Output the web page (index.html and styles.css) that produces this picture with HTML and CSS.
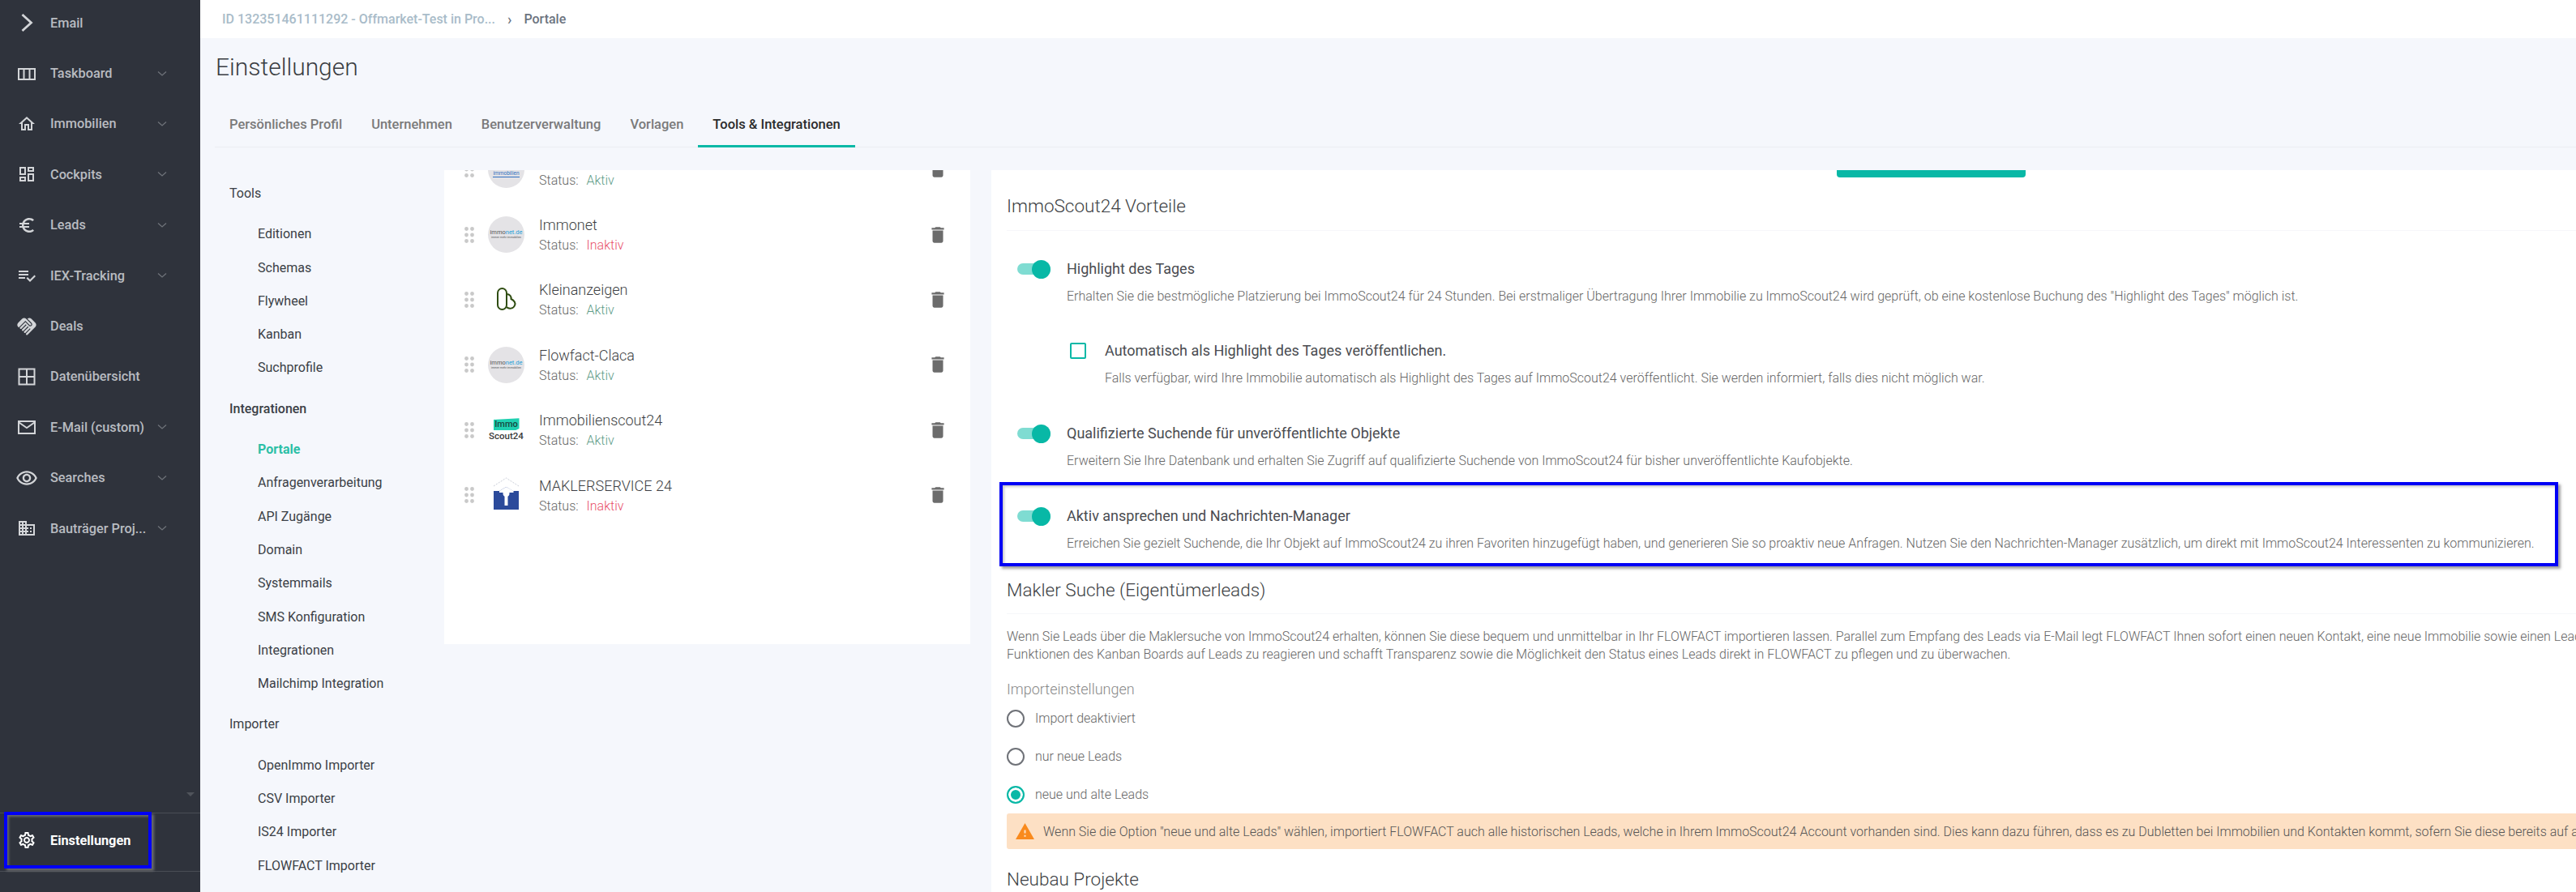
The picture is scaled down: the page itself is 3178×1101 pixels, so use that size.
FILE: index.html
```html
<!DOCTYPE html>
<html lang="de">
<head>
  <meta charset="UTF-8">
  <title>Einstellungen</title>
  <link rel="stylesheet" href="styles.css">
</head>
<body>

  <svg class="sprites" width="0" height="0">
    <symbol id="i-down" viewBox="0 0 12 8"><path d="M1 1.5l5 4.5 5-4.5" fill="none" stroke="currentColor" stroke-width="1.3"/></symbol>
    <symbol id="i-drag" viewBox="0 0 12 20"><circle cx="2.5" cy="2.5" r="2.4"/><circle cx="9.5" cy="2.5" r="2.4"/><circle cx="2.5" cy="10" r="2.4"/><circle cx="9.5" cy="10" r="2.4"/><circle cx="2.5" cy="17.5" r="2.4"/><circle cx="9.5" cy="17.5" r="2.4"/></symbol>
    <symbol id="i-trash" viewBox="0 0 24 24"><path d="M6 19c0 1.1.9 2 2 2h8c1.1 0 2-.9 2-2V7H6v12zM19 4h-3.5l-1-1h-5l-1 1H5v2h14V4z"/></symbol>
  </svg>

  <!-- Seitenleiste -->
  <aside class="sidebar">
    <ul class="side-nav">
      <li class="side-item">
        <svg class="side-icon" viewBox="0 0 24 24"><path d="M6.500 2l11 10-11 10" fill="none" stroke="currentColor" stroke-width="2.8"/></svg>
        <span class="side-text">Email</span>
      </li>
      <li class="side-item">
        <svg class="side-icon" viewBox="0 0 24 24"><path d="M1 5h22v15H1z M3 7v11h4.5V7z M9.5 7v11h5V7z M16.500 7v11H21V7z" fill-rule="evenodd"/></svg>
        <span class="side-text">Taskboard</span>
        <svg class="side-down"><use href="#i-down"/></svg>
      </li>
      <li class="side-item">
        <svg class="side-icon" viewBox="0 0 24 24"><path d="M12 5.690l5 4.500V18h-2v-6H9v6H7v-7.810l5-4.500M12 3L2 12h3v8h6v-6h2v6h6v-8h3L12 3z"/></svg>
        <span class="side-text">Immobilien</span>
        <svg class="side-down"><use href="#i-down"/></svg>
      </li>
      <li class="side-item">
        <svg class="side-icon" viewBox="0 0 24 24"><path d="M19 5v2h-4V5h4M9 5v6H5V5h4m10 8v6h-4v-6h4M9 17v2H5v-2h4M21 3h-8v6h8V3zM11 3H3v10h8V3zm10 8h-8v10h8V11zm-10 4H3v6h8v-6z"/></svg>
        <span class="side-text">Cockpits</span>
        <svg class="side-down"><use href="#i-down"/></svg>
      </li>
      <li class="side-item">
        <svg class="side-icon" viewBox="0 0 24 24"><path d="M15 18.500c-2.510 0-4.680-1.420-5.760-3.500H15v-2H8.580c-.05-.33-.08-.66-.08-1s.03-.67.08-1H15V9H9.240C10.320 6.920 12.500 5.500 15 5.500c1.610 0 3.090.59 4.230 1.570L21 5.300C19.410 3.870 17.300 3 15 3c-3.920 0-7.240 2.510-8.480 6H3v2h3.060c-.04.33-.06.66-.06 1s.02.67.06 1H3v2h3.520c1.240 3.490 4.560 6 8.480 6 2.310 0 4.410-.87 6-2.300l-1.780-1.770c-1.130.98-2.600 1.570-4.220 1.570z"/></svg>
        <span class="side-text">Leads</span>
        <svg class="side-down"><use href="#i-down"/></svg>
      </li>
      <li class="side-item">
        <svg class="side-icon" viewBox="0 0 24 24"><path d="M14 10H2v2h12v-2zm0-4H2v2h12V6zM2 16h8v-2H2v2zm19.500-4.500L23 13l-6.990 7-4.510-4.500L13 14l3.010 3 5.490-5.500z"/></svg>
        <span class="side-text">IEX-Tracking</span>
        <svg class="side-down"><use href="#i-down"/></svg>
      </li>
      <li class="side-item">
        <svg class="side-icon side-icon-wide" viewBox="0 0 24 24"><path d="M16.480 10.410c-.39.39-1.040.39-1.430 0l-4.470-4.460-7.050 7.040-.66-.63c-1.170-1.170-1.170-3.070 0-4.240l4.240-4.240c1.170-1.170 3.070-1.170 4.240 0L16.480 9c.39.39.39 1.020 0 1.410zm.7-2.120c.78.78.78 2.050 0 2.830-1.270 1.270-2.610.22-2.830 0l-3.760-3.760-5.570 5.570c-.39.39-.39 1.020 0 1.410.39.39 1.020.39 1.420 0l4.620-4.620.71.71-4.620 4.620c-.39.39-.39 1.020 0 1.410.39.39 1.020.39 1.420 0l4.620-4.620.71.71-4.620 4.620c-.39.39-.39 1.020 0 1.410.39.39 1.020.39 1.410 0l4.620-4.620.71.71-4.620 4.620c-.39.39-.39 1.020 0 1.410.39.39 1.020.39 1.410 0l8.320-8.340c1.170-1.170 1.170-3.070 0-4.240l-4.240-4.240c-1.150-1.150-3.010-1.170-4.180-.06l4.180 4.180z"/></svg>
        <span class="side-text">Deals</span>
      </li>
      <li class="side-item">
        <svg class="side-icon" viewBox="0 0 24 24"><path d="M1.500 1.500h21v21h-21z M3.500 3.500v7.500H11V3.500z M13 3.500V11h7.500V3.500z M3.500 13v7.500H11V13z M13 13v7.500h7.500V13z" fill-rule="evenodd"/></svg>
        <span class="side-text">Datenübersicht</span>
      </li>
      <li class="side-item">
        <svg class="side-icon" viewBox="0 0 24 24"><path d="M1 4h22v17H1V4zm2.500 2l8.500 6 8.500-6h-17zM21 19V8l-9 6.200L3 8v11h18z" fill-rule="evenodd"/></svg>
        <span class="side-text">E-Mail (custom)</span>
        <svg class="side-down"><use href="#i-down"/></svg>
      </li>
      <li class="side-item">
        <svg class="side-icon side-icon-wide" viewBox="0 0 24 24"><path d="M12 6.500c3.790 0 7.170 2.130 8.820 5.500-1.650 3.370-5.020 5.500-8.820 5.500S4.830 15.370 3.180 12C4.830 8.630 8.210 6.500 12 6.500m0-2C7 4.500 2.730 7.610 1 12c1.730 4.390 6 7.500 11 7.500s9.270-3.110 11-7.500c-1.730-4.390-6-7.500-11-7.500zm0 5c1.380 0 2.500 1.120 2.500 2.500s-1.120 2.500-2.500 2.500-2.500-1.120-2.500-2.500 1.120-2.500 2.500-2.500m0-2c-2.480 0-4.500 2.020-4.500 4.500s2.020 4.500 4.500 4.500 4.500-2.020 4.500-4.500-2.020-4.500-4.500-4.500z"/></svg>
        <span class="side-text">Searches</span>
        <svg class="side-down"><use href="#i-down"/></svg>
      </li>
      <li class="side-item">
        <svg class="side-icon" viewBox="0 0 24 24"><path d="M12 7V3H2v18h20V7H12zM6 19H4v-2h2v2zm0-4H4v-2h2v2zm0-4H4V9h2v2zm0-4H4V5h2v2zm4 12H8v-2h2v2zm0-4H8v-2h2v2zm0-4H8V9h2v2zm0-4H8V5h2v2zm10 12h-8v-2h2v-2h-2v-2h2v-2h-2V9h8v10zm-2-8h-2v2h2v-2zm0 4h-2v2h2v-2z"/></svg>
        <span class="side-text">Bauträger Proj...</span>
        <svg class="side-down"><use href="#i-down"/></svg>
      </li>
    </ul>
    <div class="side-scroll"></div>
    <div class="side-foot">
      <div class="side-mark">
        <svg class="side-icon" viewBox="0 0 24 24"><path d="M19.430 12.980c.04-.32.07-.64.07-.98 0-.34-.03-.66-.07-.98l2.110-1.650c.19-.15.24-.42.12-.64l-2-3.460c-.09-.16-.26-.25-.44-.25-.06 0-.12.01-.17.03l-2.490 1c-.52-.4-1.080-.73-1.690-.98l-.38-2.650C14.460 2.180 14.250 2 14 2h-4c-.25 0-.46.18-.49.42l-.38 2.650c-.61.25-1.170.59-1.690.98l-2.490-1c-.06-.02-.12-.03-.18-.03-.17 0-.34.09-.43.25l-2 3.460c-.13.22-.07.49.12.64l2.110 1.650c-.04.32-.07.65-.07.98 0 .33.03.66.07.98l-2.110 1.650c-.19.15-.24.42-.12.64l2 3.460c.09.16.26.25.44.25.06 0 .12-.01.17-.03l2.490-1c.52.4 1.080.73 1.690.98l.38 2.650c.03.24.24.42.49.42h4c.25 0 .46-.18.49-.42l.38-2.650c.61-.25 1.170-.59 1.690-.98l2.490 1c.06.02.12.03.18.03.17 0 .34-.09.43-.25l2-3.460c.12-.22.07-.49-.12-.64l-2.110-1.650zm-1.980-1.710c.04.31.05.52.05.73 0 .21-.02.43-.05.73l-.14 1.130.89.7 1.080.84-.7 1.210-1.270-.51-1.040-.42-.9.68c-.43.32-.84.56-1.250.73l-1.060.43-.16 1.130-.2 1.350h-1.400l-.19-1.350-.16-1.130-1.060-.43c-.43-.18-.83-.41-1.230-.71l-.91-.7-1.060.43-1.270.51-.7-1.210 1.080-.84.89-.7-.14-1.130c-.03-.31-.05-.54-.05-.74s.02-.43.05-.73l.14-1.130-.89-.7-1.080-.84.7-1.210 1.270.51 1.040.42.9-.68c.43-.32.84-.56 1.250-.73l1.060-.43.16-1.130.2-1.350h1.390l.19 1.350.16 1.130 1.060.43c.43.18.83.41 1.230.71l.91.7 1.060-.43 1.270-.51.7 1.210-1.070.85-.89.7.14 1.130zM12 8c-2.210 0-4 1.790-4 4s1.790 4 4 4 4-1.790 4-4-1.790-4-4-4zm0 6c-1.100 0-2-.9-2-2s.9-2 2-2 2 .9 2 2-.9 2-2 2z"/></svg>
        <span class="side-text side-text-strong">Einstellungen</span>
      </div>
    </div>
  </aside>

  <div class="main">
    <div class="topbar">
      <span class="crumb">ID 132351461111292 - Offmarket-Test in Pro...</span>
      <span class="crumb-sep">›</span>
      <span class="crumb-now">Portale</span>
    </div>

    <h1 class="page-title">Einstellungen</h1>

    <div class="tabs">
      <div class="tab">Persönliches Profil</div>
      <div class="tab">Unternehmen</div>
      <div class="tab">Benutzerverwaltung</div>
      <div class="tab">Vorlagen</div>
      <div class="tab tab-active">Tools &amp; Integrationen</div>
    </div>

    <div class="content">
      <!-- Untermenü -->
      <nav class="sub-nav">
        <div class="sub-title">Tools</div>
        <div class="sub-link">Editionen</div>
        <div class="sub-link">Schemas</div>
        <div class="sub-link">Flywheel</div>
        <div class="sub-link">Kanban</div>
        <div class="sub-link">Suchprofile</div>
        <div class="sub-title sub-title-strong">Integrationen</div>
        <div class="sub-link sub-link-active">Portale</div>
        <div class="sub-link">Anfragenverarbeitung</div>
        <div class="sub-link">API Zugänge</div>
        <div class="sub-link">Domain</div>
        <div class="sub-link">Systemmails</div>
        <div class="sub-link">SMS Konfiguration</div>
        <div class="sub-link">Integrationen</div>
        <div class="sub-link">Mailchimp Integration</div>
        <div class="sub-title">Importer</div>
        <div class="sub-link">OpenImmo Importer</div>
        <div class="sub-link">CSV Importer</div>
        <div class="sub-link">IS24 Importer</div>
        <div class="sub-link">FLOWFACT Importer</div>
      </nav>

      <!-- Portale -->
      <section class="portal-card">
        <div class="portal-list">
          <div class="portal">
            <svg class="drag"><use href="#i-drag"/></svg>
            <div class="logo logo-round">
              <span class="logo-ivd">IVD24</span>
              <span class="logo-ivd-sub">immobilien</span>
            </div>
            <div class="portal-text">
              <div class="portal-name">IVD24</div>
              <div class="portal-status">Status: <span class="on">Aktiv</span></div>
            </div>
            <svg class="trash"><use href="#i-trash"/></svg>
          </div>
          <div class="portal">
            <svg class="drag"><use href="#i-drag"/></svg>
            <div class="logo logo-round">
              <span class="logo-immonet">immo<b>net.de</b></span>
              <span class="logo-tiny">immer mehr immobilien</span>
            </div>
            <div class="portal-text">
              <div class="portal-name">Immonet</div>
              <div class="portal-status">Status: <span class="off">Inaktiv</span></div>
            </div>
            <svg class="trash"><use href="#i-trash"/></svg>
          </div>
          <div class="portal">
            <svg class="drag"><use href="#i-drag"/></svg>
            <div class="logo">
              <svg class="logo-svg" viewBox="0 0 45 45" fill="none" stroke="#2f4d12" stroke-width="2">
                <rect x="12" y="9" width="11" height="26" rx="5.500"/>
                <path d="M23 16c4 0 6 3 5.500 6 4 2 6 5 4.500 8-1.500 4-7 5-10 2"/>
              </svg>
            </div>
            <div class="portal-text">
              <div class="portal-name">Kleinanzeigen</div>
              <div class="portal-status">Status: <span class="on">Aktiv</span></div>
            </div>
            <svg class="trash"><use href="#i-trash"/></svg>
          </div>
          <div class="portal">
            <svg class="drag"><use href="#i-drag"/></svg>
            <div class="logo logo-round">
              <span class="logo-immonet">immo<b>net.de</b></span>
              <span class="logo-tiny">immer mehr immobilien</span>
            </div>
            <div class="portal-text">
              <div class="portal-name">Flowfact-Claca</div>
              <div class="portal-status">Status: <span class="on">Aktiv</span></div>
            </div>
            <svg class="trash"><use href="#i-trash"/></svg>
          </div>
          <div class="portal">
            <svg class="drag"><use href="#i-drag"/></svg>
            <div class="logo">
              <span class="logo-immo">Immo</span>
              <span class="logo-scout">Scout24</span>
            </div>
            <div class="portal-text">
              <div class="portal-name">Immobilienscout24</div>
              <div class="portal-status">Status: <span class="on">Aktiv</span></div>
            </div>
            <svg class="trash"><use href="#i-trash"/></svg>
          </div>
          <div class="portal">
            <svg class="drag"><use href="#i-drag"/></svg>
            <div class="logo">
              <svg class="logo-svg" viewBox="0 0 45 45">
                <path d="M7 11l15.500-10L38 11" fill="none" stroke="#c9cdd8" stroke-width="1" stroke-dasharray="2 1.500"/>
                <path d="M7 17l7 0 8.500-5L31 17h7v23H7z" fill="#2b4a9b"/>
                <path d="M22.500 12l9 5v2H14v-2z" fill="#fff"/>
                <circle cx="22.500" cy="20" r="4" fill="#fff"/>
                <path d="M20.500 22h4v13h-4z" fill="#fff"/>
              </svg>
            </div>
            <div class="portal-text">
              <div class="portal-name">MAKLERSERVICE 24</div>
              <div class="portal-status">Status: <span class="off">Inaktiv</span></div>
            </div>
            <svg class="trash"><use href="#i-trash"/></svg>
          </div>
        </div>
      </section>

      <!-- ImmoScout24 Details -->
      <section class="detail-card">
        <div class="save-button"></div>

        <h2 class="section-title section-first">ImmoScout24 Vorteile</h2>

        <div class="feature feature-first">
          <div class="toggle"><span class="toggle-thumb"></span></div>
          <div>
            <div class="feature-label">Highlight des Tages</div>
            <div class="feature-desc">Erhalten Sie die bestmögliche Platzierung bei ImmoScout24 für 24 Stunden. Bei erstmaliger Übertragung Ihrer Immobilie zu ImmoScout24 wird geprüft, ob eine kostenlose Buchung des "Highlight des Tages" möglich ist.</div>
          </div>
        </div>

        <div class="feature feature-sub">
          <div class="checkbox"></div>
          <div>
            <div class="feature-label">Automatisch als Highlight des Tages veröffentlichen.</div>
            <div class="feature-desc">Falls verfügbar, wird Ihre Immobilie automatisch als Highlight des Tages auf ImmoScout24 veröffentlicht. Sie werden informiert, falls dies nicht möglich war.</div>
          </div>
        </div>

        <div class="feature">
          <div class="toggle"><span class="toggle-thumb"></span></div>
          <div>
            <div class="feature-label">Qualifizierte Suchende für unveröffentlichte Objekte</div>
            <div class="feature-desc">Erweitern Sie Ihre Datenbank und erhalten Sie Zugriff auf qualifizierte Suchende von ImmoScout24 für bisher unveröffentlichte Kaufobjekte.</div>
          </div>
        </div>

        <div class="feature feature-marked">
          <div class="toggle"><span class="toggle-thumb"></span></div>
          <div>
            <div class="feature-label">Aktiv ansprechen und Nachrichten-Manager</div>
            <div class="feature-desc">Erreichen Sie gezielt Suchende, die Ihr Objekt auf ImmoScout24 zu ihren Favoriten hinzugefügt haben, und generieren Sie so proaktiv neue Anfragen. Nutzen Sie den Nachrichten-Manager zusätzlich, um direkt mit ImmoScout24 Interessenten zu kommunizieren.</div>
          </div>
        </div>

        <h2 class="section-title section-makler">Makler Suche (Eigentümerleads)</h2>

        <p class="intro">Wenn Sie Leads über die Maklersuche von ImmoScout24 erhalten, können Sie diese bequem und unmittelbar in Ihr FLOWFACT importieren lassen. Parallel zum Empfang des Leads via E-Mail legt FLOWFACT Ihnen sofort einen neuen Kontakt, eine neue Immobilie sowie einen Lead<br>Funktionen des Kanban Boards auf Leads zu reagieren und schafft Transparenz sowie die Möglichkeit den Status eines Leads direkt in FLOWFACT zu pflegen und zu überwachen.</p>

        <div class="radio-title">Importeinstellungen</div>
        <div class="radio-row"><span class="radio"></span>Import deaktiviert</div>
        <div class="radio-row"><span class="radio"></span>nur neue Leads</div>
        <div class="radio-row"><span class="radio radio-on"></span>neue und alte Leads</div>

        <div class="notice">
          <svg class="notice-icon" viewBox="0 0 24 24"><path d="M1 21h22L12 2 1 21zm12-3h-2v-2h2v2zm0-4h-2v-4h2v4z"/></svg>
          Wenn Sie die Option "neue und alte Leads" wählen, importiert FLOWFACT auch alle historischen Leads, welche in Ihrem ImmoScout24 Account vorhanden sind. Dies kann dazu führen, dass es zu Dubletten bei Immobilien und Kontakten kommt, sofern Sie diese bereits auf anderem Wege importiert haben.
        </div>

        <h2 class="section-title section-neubau">Neubau Projekte</h2>
      </section>
    </div>
  </div>

</body>
</html>
```

FILE: styles.css
```css
body {
  margin: 0;
  height: 100vh;
  display: flex;
  overflow: hidden;
  font-family: Roboto, sans-serif;
  background: #f5f7fc;
  color: #333;
}
.sprites {
  position: absolute;
}

/* Seitenleiste */
.sidebar {
  width: 247px;
  flex-shrink: 0;
  display: flex;
  flex-direction: column;
  background: #2f333c;
  color: #b9bcc1;
}
.side-nav {
  flex: 1;
  margin: -3px 0 0;
  padding: 0;
  list-style: none;
  overflow: hidden;
}
.side-item {
  height: 62.4px;
  display: flex;
  align-items: center;
  padding-left: 21px;
}
.side-icon {
  width: 24px;
  height: 24px;
  flex-shrink: 0;
  fill: currentColor;
  color: #d3d5d8;
}
.side-icon-wide {
  width: 28px;
  height: 28px;
  margin: 0 -2px;
}
.side-text {
  margin-left: 17px;
  font-size: 16.300px;
  font-weight: 500;
  width: 120px;
  white-space: nowrap;
}
.side-text-strong {
  color: #fff;
  font-weight: 700;
}
.side-down {
  width: 12px;
  height: 8px;
  margin-left: 12px;
  color: #6f737a;
}
.side-scroll {
  width: 0;
  height: 0;
  margin: 0 0 20px 230px;
  border-left: 5px solid transparent;
  border-right: 5px solid transparent;
  border-top: 5px solid #50545b;
}
.side-foot {
  height: 73px;
  margin-bottom: 25px;
  box-sizing: border-box;
  border-top: 1px solid #494d55;
  border-bottom: 1px solid #494d55;
}
.side-mark {
  width: 182px;
  height: 70px;
  margin: -2px 0 0 5px;
  box-sizing: border-box;
  display: flex;
  align-items: center;
  padding-left: 12px;
  border: 4px solid #0000f5;
  box-shadow: 3px 3px 3px rgba(130, 130, 130, 0.7), inset 2px 2px 3px rgba(130, 130, 130, 0.7);
}
.side-mark .side-icon {
  color: #fff;
}

/* Hauptbereich */
.main {
  flex: 1;
  min-width: 0;
  display: flex;
  flex-direction: column;
}
.topbar {
  height: 47px;
  flex-shrink: 0;
  display: flex;
  align-items: center;
  padding-left: 27px;
  background: #fff;
  font-size: 16px;
  font-weight: 500;
}
.crumb {
  color: #a9bcc9;
}
.crumb-sep {
  margin: 0 15px;
  color: #6c7480;
  font-size: 18px;
}
.crumb-now {
  color: #6c7480;
}
.page-title {
  margin: 16px 0 0 19px;
  font-size: 30px;
  line-height: 40px;
  font-weight: 300;
  color: #3a3d42;
}
.tabs {
  margin: 23px 0 0 18px;
  display: flex;
  height: 56px;
  flex-shrink: 0;
  box-sizing: border-box;
  border-bottom: 1px solid #eceef3;
}
.tab {
  height: 56px;
  box-sizing: border-box;
  padding: 0 18px;
  line-height: 56px;
  font-size: 16.500px;
  font-weight: 500;
  color: #7a7a7a;
}
.tab-active {
  color: #2b2b2b;
  border-bottom: 3px solid #08b8a6;
}
.content {
  flex: 1;
  min-height: 0;
  display: flex;
  align-items: flex-start;
  overflow: hidden;
}

/* Untermenü */
.sub-nav {
  width: 265px;
  flex-shrink: 0;
  padding: 27px 0 0 36px;
  font-size: 16px;
  line-height: 41.300px;
  color: #3b3f46;
}
.sub-title {
  margin: 9px 0;
}
.sub-title-strong {
  font-weight: 500;
}
.sub-link {
  padding-left: 35px;
}
.sub-link-active {
  color: #2cbfa6;
  font-weight: 700;
}

/* Portale */
.portal-card {
  width: 649px;
  height: 585px;
  flex-shrink: 0;
  margin-top: 28px;
  background: #fff;
  overflow: hidden;
}
.portal-list {
  margin-top: -41px;
}
.portal {
  height: 80.400px;
  display: flex;
  align-items: center;
  padding: 0 27px 0 25px;
}
.drag {
  width: 12px;
  height: 20px;
  margin-right: 17px;
  fill: #c9c9c9;
}
.logo {
  width: 45px;
  height: 45px;
  flex-shrink: 0;
  display: flex;
  flex-direction: column;
  align-items: center;
  justify-content: center;
}
.logo-round {
  border-radius: 50%;
  background: #e4e3e6;
}
.logo-svg {
  width: 45px;
  height: 45px;
}
.logo-immonet {
  font-size: 7.500px;
  line-height: 8px;
  color: #555;
}
.logo-immonet b {
  font-weight: 400;
  color: #1f9fd8;
}
.logo-tiny {
  font-size: 3.500px;
  line-height: 5px;
  color: #555;
}
.logo-ivd {
  font-size: 9px;
  line-height: 10px;
  font-weight: 700;
  color: #223b8f;
}
.logo-ivd-sub {
  font-size: 6.500px;
  line-height: 8px;
  color: #2f6fc0;
  border-bottom: 1px solid #2f6fc0;
}
.logo-immo {
  width: 32px;
  height: 15px;
  background: #1fd0b0;
  font-size: 11px;
  line-height: 15px;
  text-align: center;
  font-weight: 500;
  color: #17463f;
  clip-path: polygon(0 12%, 100% 0, 100% 85%, 85% 100%, 0 100%);
}
.logo-scout {
  margin-top: 1px;
  font-size: 11.500px;
  line-height: 13px;
  font-weight: 500;
  color: #3b3b3b;
}
.portal-text {
  flex: 1;
  margin-left: 18px;
}
.portal-name {
  font-size: 18px;
  line-height: 24px;
  font-weight: 300;
  color: #3d3f44;
}
.portal-status {
  margin-top: 3px;
  font-size: 16px;
  line-height: 20px;
  font-weight: 300;
  color: #666;
}
.on {
  margin-left: 6px;
  color: #5f9d88;
}
.off {
  margin-left: 6px;
  color: #e8506a;
}
.trash {
  width: 26px;
  height: 26px;
  fill: #6c6c6c;
}

/* Details */
.detail-card {
  flex: 1;
  min-width: 0;
  height: 891px;
  margin: 28px 0 0 26px;
  padding-left: 19px;
  background: #fff;
  white-space: nowrap;
  overflow: hidden;
}
.save-button {
  width: 233px;
  height: 9px;
  margin-left: 1024px;
  background: #08b8a6;
  border-radius: 0 0 4px 4px;
}
.section-title {
  margin: 0;
  font-size: 22.500px;
  line-height: 30px;
  font-weight: 300;
  color: #3d3f44;
}
.section-first {
  margin-top: 20px;
  padding-bottom: 15px;
  border-bottom: 1px solid #f6f7fa;
}
.section-makler {
  margin-top: 14px;
  padding-bottom: 14px;
  border-bottom: 1px solid #f6f7fa;
}
.section-neubau {
  margin-top: 22px;
}
.feature {
  display: flex;
  margin-top: 46px;
  padding-left: 13px;
}
.feature-first {
  margin-top: 35px;
}
.feature-sub {
  margin-top: 45px;
  padding-left: 78px;
}
.feature-marked {
  width: 1923px;
  height: 104px;
  box-sizing: border-box;
  margin: 16px 0 0 -9px;
  padding: 26px 0 0 18px;
  border: 4px solid #0000f5;
  box-shadow: 3px 3px 3px rgba(120, 120, 120, 0.7), inset 2px 2px 3px rgba(120, 120, 120, 0.4);
}
.feature-label {
  font-size: 18px;
  line-height: 24px;
  color: #4a4c51;
}
.feature-desc {
  margin-top: 12px;
  font-size: 16px;
  line-height: 20px;
  font-weight: 300;
  color: #666;
}
.toggle {
  width: 41px;
  height: 14px;
  margin: 5px 20px 0 0;
  flex-shrink: 0;
  display: flex;
  align-items: center;
  justify-content: flex-end;
  border-radius: 7px;
  background: #7fdcd2;
}
.toggle-thumb {
  width: 23px;
  height: 23px;
  flex-shrink: 0;
  border-radius: 50%;
  background: #08b8a6;
}
.checkbox {
  width: 20px;
  height: 20px;
  box-sizing: border-box;
  margin: 2px 23px 0 0;
  flex-shrink: 0;
  border: 2px solid #08b8a6;
  border-radius: 2px;
}
.intro {
  margin: 17px 0 0;
  font-size: 16px;
  line-height: 22px;
  font-weight: 300;
  color: #666;
}
.radio-title {
  margin-top: 20px;
  font-size: 18px;
  line-height: 24px;
  font-weight: 300;
  color: #888;
}
.radio-row {
  height: 47px;
  display: flex;
  align-items: center;
  font-size: 16px;
  font-weight: 300;
  color: #666;
}
.radio {
  width: 22px;
  height: 22px;
  box-sizing: border-box;
  margin-right: 13px;
  flex-shrink: 0;
  border: 2px solid #6f7278;
  border-radius: 50%;
}
.radio-on {
  border-color: #08b8a6;
  background: #08b8a6;
  box-shadow: inset 0 0 0 3px #fff;
}
.notice {
  height: 44px;
  display: flex;
  align-items: center;
  padding-left: 10px;
  background: #fde0c4;
  border-radius: 3px 0 0 3px;
  font-size: 16px;
  font-weight: 300;
  color: #555;
}
.notice-icon {
  width: 25px;
  height: 25px;
  margin-right: 10px;
  flex-shrink: 0;
  fill: #f98a1d;
}
```
